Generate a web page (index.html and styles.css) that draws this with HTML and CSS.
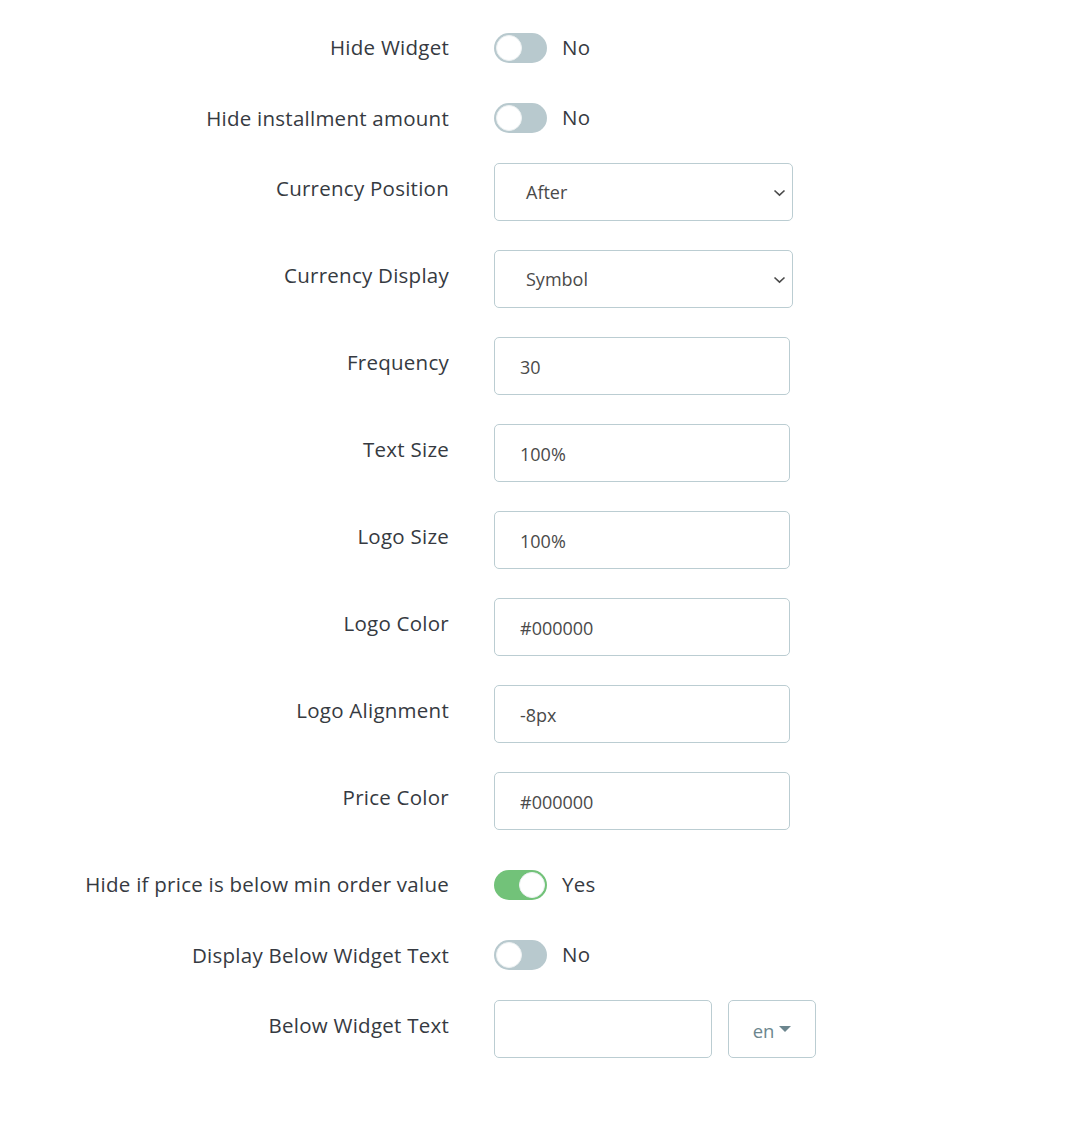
FILE: index.html
```
<!DOCTYPE html>
<html>
<head>
<meta charset="utf-8">
<link rel="stylesheet" href="styles.css">
</head>
<body>
<form class="form">
  <div class="row row-toggle">
    <label class="label">Hide Widget</label>
    <div class="control"><span class="switch"><span class="knob"></span></span><span class="state">No</span></div>
  </div>
  <div class="row row-toggle">
    <label class="label">Hide installment amount</label>
    <div class="control"><span class="switch"><span class="knob"></span></span><span class="state">No</span></div>
  </div>
  <div class="row">
    <label class="label">Currency Position</label>
    <div class="control"><div class="select"><span>After</span><svg class="chev" viewBox="0 0 12 8" width="13" height="8"><path d="M1 1.5 L6 6.2 L11 1.5" fill="none" stroke="#4a4a4a" stroke-width="1.6"/></svg></div></div>
  </div>
  <div class="row">
    <label class="label">Currency Display</label>
    <div class="control"><div class="select"><span>Symbol</span><svg class="chev" viewBox="0 0 12 8" width="13" height="8"><path d="M1 1.5 L6 6.2 L11 1.5" fill="none" stroke="#4a4a4a" stroke-width="1.6"/></svg></div></div>
  </div>
  <div class="row">
    <label class="label">Frequency</label>
    <div class="control"><div class="input">30</div></div>
  </div>
  <div class="row">
    <label class="label">Text Size</label>
    <div class="control"><div class="input">100%</div></div>
  </div>
  <div class="row">
    <label class="label">Logo Size</label>
    <div class="control"><div class="input">100%</div></div>
  </div>
  <div class="row">
    <label class="label">Logo Color</label>
    <div class="control"><div class="input">#000000</div></div>
  </div>
  <div class="row">
    <label class="label">Logo Alignment</label>
    <div class="control"><div class="input">-8px</div></div>
  </div>
  <div class="row">
    <label class="label">Price Color</label>
    <div class="control"><div class="input">#000000</div></div>
  </div>
  <div class="row row-toggle">
    <label class="label">Hide if price is below min order value</label>
    <div class="control"><span class="switch on"><span class="knob"></span></span><span class="state">Yes</span></div>
  </div>
  <div class="row row-toggle">
    <label class="label">Display Below Widget Text</label>
    <div class="control"><span class="switch"><span class="knob"></span></span><span class="state">No</span></div>
  </div>
  <div class="row">
    <label class="label">Below Widget Text</label>
    <div class="control lang-group"><div class="input input-short"></div><div class="lang-btn">en<span class="caret"></span></div></div>
  </div>
</form>
</body>
</html>
```
FILE: styles.css
```
* { box-sizing: border-box; }
body {
  margin: 0;
  background: #fff;
  font-family: "Open Sans", "Noto Sans", sans-serif;
  color: #363a41;
}
.form {
  padding-top: 22px;
  display: flex;
  flex-direction: column;
  gap: 29px;
}
.row {
  display: flex;
  align-items: flex-start;
  min-height: 41.5px;
}
.label {
  width: 449px;
  flex: none;
  text-align: right;
  font-size: 20.5px;
  letter-spacing: 0.25px;
  line-height: 26px;
  padding-top: 12px;
  color: #363a41;
}
.control {
  margin-left: 45px;
  display: flex;
  align-items: center;
}
.row-toggle .control {
  padding-top: 10.5px;
}
.switch {
  width: 53px;
  height: 30px;
  border-radius: 15px;
  background: #b8c9ce;
  padding: 2px;
  display: flex;
}
.switch.on {
  background: #72c279;
  justify-content: flex-end;
}
.knob {
  width: 26px;
  height: 26px;
  border-radius: 50%;
  background: #fff;
  border: 1px solid #eef2f3;
}
.state {
  margin-left: 15px;
  font-size: 20.5px;
  letter-spacing: 0.25px;
  line-height: 26px;
  padding-bottom: 2px;
  color: #363a41;
}
.select {
  width: 299px;
  height: 58px;
  border: 1px solid #bbcdd2;
  border-radius: 5px;
  display: flex;
  align-items: center;
  justify-content: space-between;
  padding: 0 6px 0 31px;
  font-size: 18px;
  color: #4a4a4a;
}
.chev { margin-top: 1px; }
.input {
  width: 296px;
  height: 58px;
  border: 1px solid #bbcdd2;
  border-radius: 5px;
  display: flex;
  align-items: center;
  padding: 2px 25px 0;
  font-size: 18px;
  color: #4a4a4a;
}
.input-short { width: 218px; }
.lang-btn {
  margin-left: 16px;
  width: 88px;
  height: 58px;
  border: 1px solid #bbcdd2;
  border-radius: 5px;
  display: flex;
  align-items: center;
  justify-content: center;
  padding-top: 2px;
  font-size: 18.5px;
  color: #6c868e;
}
.caret {
  margin-left: 5px;
  width: 0;
  height: 0;
  border-left: 6px solid transparent;
  border-right: 6px solid transparent;
  border-top: 6px solid #6c868e;
  margin-top: -2px;
}
```
